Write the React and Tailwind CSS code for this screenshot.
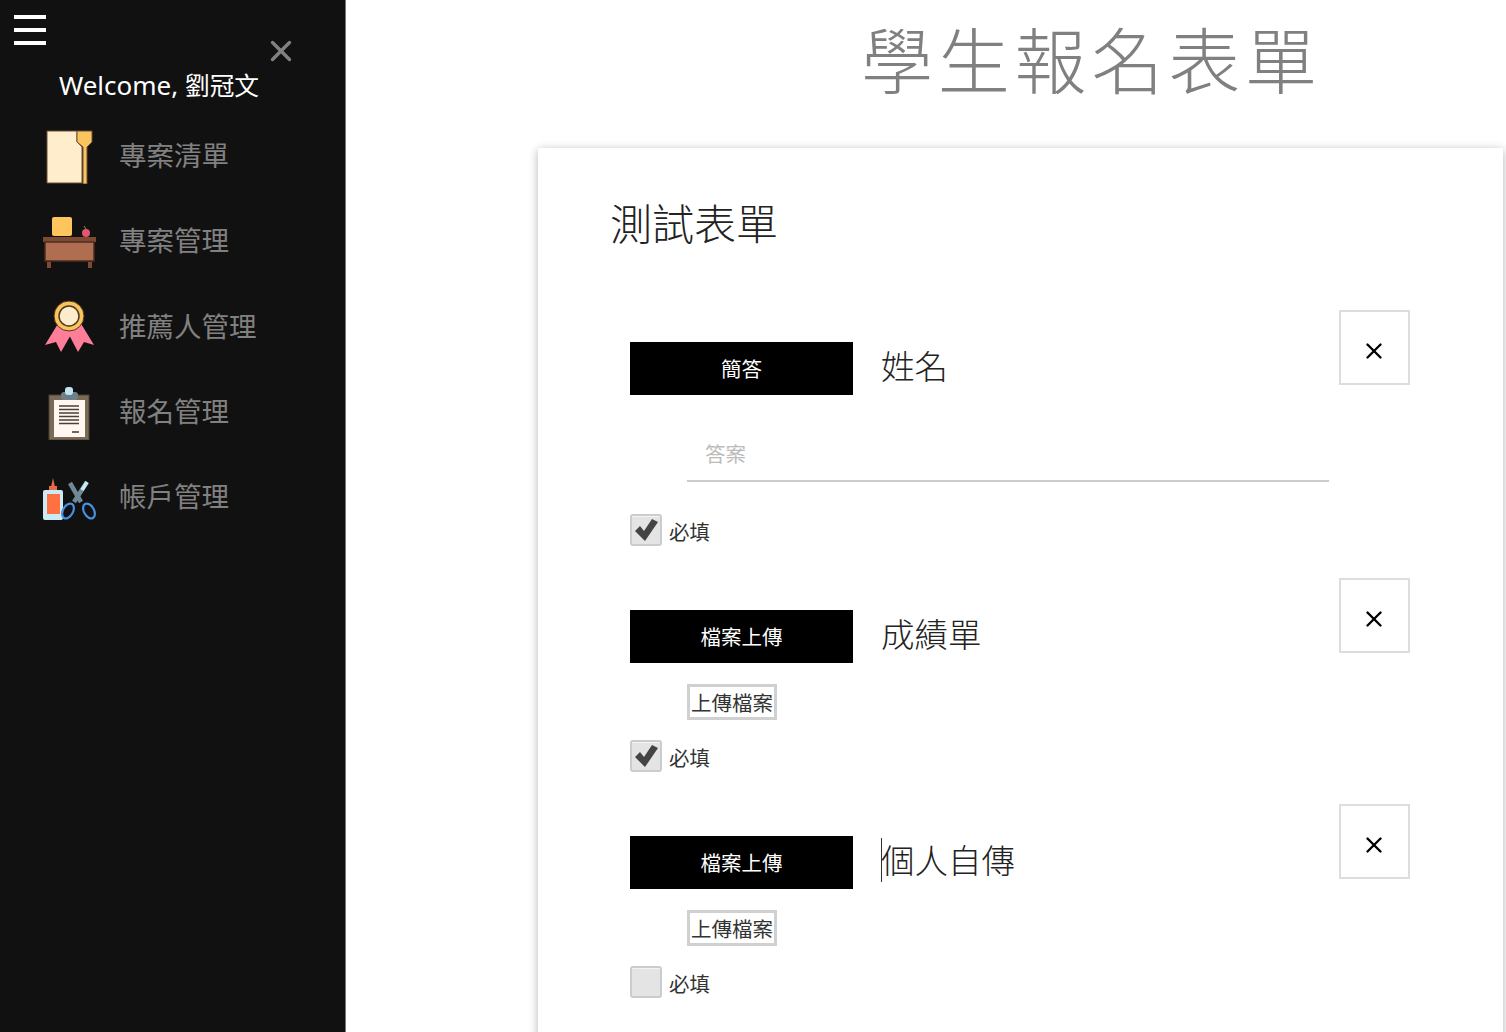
import { X } from "lucide-react"

const FONT = "font-['Noto_Sans','Noto_Sans_CJK_TC',sans-serif]"

function NoteIcon() {
  return (
    <svg width="56" height="56" viewBox="0 0 56 56">
      <path d="M4 3H34V14L39 19V55H4Z" fill="#ffedcb" stroke="#6b5136" strokeWidth="1" />
      <path d="M34 3H49V14L44 19V56H40V19L34 14Z" fill="#fcc45f" stroke="#6b5136" strokeWidth="1" />
    </svg>
  )
}

function DeskIcon() {
  return (
    <svg width="56" height="56" viewBox="0 0 56 56">
      <rect x="9" y="4" width="20" height="19" rx="2" fill="#fec55e" />
      <rect x="-1" y="24" width="54" height="5" fill="#7d4a32" />
      <rect x="2" y="29" width="49" height="19" fill="#af6e50" stroke="#4d2d1f" strokeWidth="1.5" />
      <rect x="4" y="49" width="4" height="6" fill="#7d4a32" />
      <rect x="45" y="49" width="4" height="6" fill="#7d4a32" />
      <circle cx="43" cy="20" r="4" fill="#e2566f" />
      <path d="M43 16L41 13" stroke="#6fa34a" strokeWidth="1" />
    </svg>
  )
}

function MedalIcon() {
  return (
    <svg width="56" height="56" viewBox="0 0 56 56">
      <path d="M16 24L2 47L13 44L18 54L30 33Z" fill="#fe7d99" />
      <path d="M37 24L51 47L41 44L35 54L24 33Z" fill="#fe7d99" />
      <circle cx="26" cy="18" r="15" fill="#fcc35c" stroke="#4a3a22" strokeWidth="1" />
      <circle cx="26" cy="18" r="10" fill="#fdeccb" stroke="#4a3a22" strokeWidth="1.5" />
    </svg>
  )
}

function ClipboardIcon() {
  return (
    <svg width="56" height="56" viewBox="0 0 56 56">
      <rect x="6" y="11" width="40" height="45" fill="#7a6a58" stroke="#4c4035" strokeWidth="1" />
      <rect x="11" y="16" width="31" height="37" fill="#fff7f0" />
      <rect x="18" y="8" width="17" height="8" rx="3" fill="#6f7f8a" />
      <rect x="22" y="3" width="8" height="8" rx="3" fill="#bfe3ef" />
      <path d="M16 22H36M16 25.500H36M16 29H36M16 32.500H36M16 36H36M16 39.500H36" stroke="#4a4038" strokeWidth="1.600" />
      <path d="M29 48H36" stroke="#6e655c" strokeWidth="2" />
    </svg>
  )
}

function ToolsIcon() {
  return (
    <svg width="56" height="56" viewBox="0 0 56 56">
      <path d="M10 9L12 18H8Z" fill="#e86a48" />
      <rect x="6" y="17" width="8" height="5" fill="#e86a48" />
      <rect x="0" y="21" width="20" height="30" rx="2" fill="#c9ecf4" />
      <rect x="4" y="25" width="13" height="20" fill="#ff7043" />
      <path d="M44 13L31 33M27 14L38 33" stroke="#6f8a97" strokeWidth="4.500" />
      <path d="M44 13L39 21" stroke="#c9ecf4" strokeWidth="3.500" />
      <ellipse cx="25" cy="42" rx="5" ry="8" transform="rotate(30 25 42)" fill="none" stroke="#4a8fe0" strokeWidth="2.200" />
      <ellipse cx="46" cy="42" rx="5" ry="8" transform="rotate(-30 46 42)" fill="none" stroke="#4a8fe0" strokeWidth="2.200" />
    </svg>
  )
}

const NAV_ITEMS = [
  { label: "專案清單", icon: <NoteIcon /> },
  { label: "專案管理", icon: <DeskIcon /> },
  { label: "推薦人管理", icon: <MedalIcon /> },
  { label: "報名管理", icon: <ClipboardIcon /> },
  { label: "帳戶管理", icon: <ToolsIcon /> },
]

function Sidebar() {
  return (
    <aside className="relative w-[346px] shrink-0 bg-[#111111] border-r border-[#777777]">
      <div className="pt-[15px] pl-[14px] flex flex-col gap-[9px] w-[46px] box-content">
        <div className="h-[4px] w-[32px] bg-white" />
        <div className="h-[4px] w-[32px] bg-white" />
        <div className="h-[4px] w-[32px] bg-white" />
      </div>
      <X className="absolute left-[264px] top-[34px] text-[#818181]" size={34} strokeWidth={2.4} />
      <p className="mt-[22px] pl-[59px] text-[26px] leading-[36px] text-white">
        Welcome, <span className="text-[24.700px]">劉冠文</span>
      </p>
      <nav className="mt-[9px] flex flex-col">
        {NAV_ITEMS.map((item) => (
          <a key={item.label} className="h-[85.3px] pl-[43px] flex items-center gap-[20px] text-[27.5px] text-[#818181]">
            {item.icon}
            {item.label}
          </a>
        ))}
      </nav>
    </aside>
  )
}

function Checkbox({ checked }) {
  return (
    <label className="h-[32px] flex items-center gap-[7px] text-[20.500px] leading-[32px] text-[#333333]">
      <span className="w-[32px] h-[32px] rounded-[3px] border-2 border-[#cccccc] bg-[#e4e4e4] shadow-[inset_0_1px_0_rgba(255,255,255,0.6)] flex items-center justify-center">
        {checked && (
          <svg width="28" height="28" viewBox="2 2 28 28">
            <path d="M5 17L10 12L14 17L22 5L28 8L15 27Z" fill="#444444" />
          </svg>
        )}
      </span>
      <span className="pt-[4px]">必填</span>
    </label>
  )
}

function Question({ type, title, caret, children, checked, className }) {
  return (
    <section className={className}>
      <div className="flex items-start">
        <div className="mt-[32px] w-[223px] h-[53px] pt-[2px] bg-black text-white text-[20.500px] flex items-center justify-center">
          {type}
        </div>
        <div className="mt-[32px] ml-[28px] flex-1 h-[48px] text-[33.500px] leading-[48px] font-light text-[#222222] flex items-center">
          {caret && <span className="w-px h-[44px] bg-[#333333] -mr-px" />}
          {title}
        </div>
        <button className="w-[71px] h-[75px] pt-[6px] pr-[2px] border-2 border-[#dddddd] flex items-center justify-center text-black">
          <X size={26} strokeWidth={2.2} />
        </button>
      </div>
      {children}
      <Checkbox checked={checked} />
    </section>
  )
}

function UploadButton() {
  return (
    <button className="mt-[21px] mb-[20px] ml-[57px] pt-[1px] block w-[90px] h-[36px] border-[3px] border-[#d0d0d0] text-[20.500px] leading-[28px] text-[#333333] whitespace-nowrap">
      上傳檔案
    </button>
  )
}

export default function App() {
  return (
    <div className={`${FONT} flex h-screen overflow-hidden`}>
      <Sidebar />
      <main className="flex-1 min-w-0">
        <h1 className="ml-[515px] mt-[14px] text-[72px] leading-[92px] font-extralight tracking-[4.800px] text-[#808080] whitespace-nowrap">
          學生報名表單
        </h1>
        <div className="mt-[42px] ml-[192px] mr-[3px] h-[900px] bg-white rounded-[2px] shadow-[0_2px_10px_rgba(0,0,0,0.3)] pl-[92px] pr-[93px]">
          <h2 className="pt-[48px] -ml-[20px] text-[42px] leading-[56px] font-light text-[#222222]">測試表單</h2>
          <Question type="簡答" title="姓名" checked className="mt-[58px]">
            <div className="mt-[39px] ml-[57px] mr-[81px] h-[48px] border-b-2 border-[#cccccc] pl-[18px] text-[20.500px] leading-[40px] text-[#bbbbbb]">
              答案
            </div>
            <div className="h-[32px]" />
          </Question>
          <Question type="檔案上傳" title="成績單" checked className="mt-[32px]">
            <UploadButton />
          </Question>
          <Question type="檔案上傳" title="個人自傳" caret className="mt-[32px]">
            <UploadButton />
          </Question>
        </div>
      </main>
    </div>
  )
}
